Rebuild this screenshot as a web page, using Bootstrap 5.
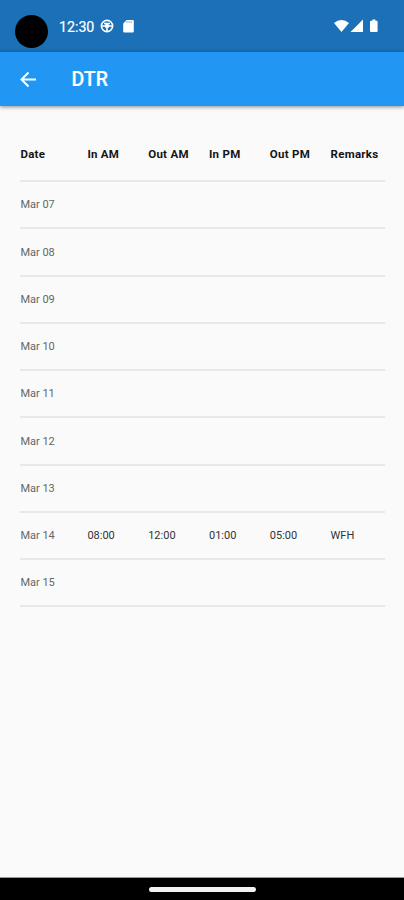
<!DOCTYPE html>
<html lang="en">
<head>
<meta charset="utf-8">
<meta name="viewport" content="width=device-width, initial-scale=1">
<title>DTR</title>
<link href="https://cdn.jsdelivr.net/npm/bootstrap@5.3.0/dist/css/bootstrap.min.css" rel="stylesheet">
<style>
  body { font-family: Roboto, "Liberation Sans", sans-serif; background: #fafafa; height: 900px; overflow: hidden; }
  .status-bar { height: 52px; background: #1b70b8; }
  .camera { width: 33px; height: 33px; margin: 15px 11px 0 15px; background: #000; }
  .clock { font-size: 14.2px; line-height: 18px; width: 40px; margin-top: 18px; -webkit-text-stroke: .2px #fff; }
  .wheel-icon { margin: 19px 0 0 1px; }
  .card-icon { margin: 20px 0 0 9px; }
  .signal-icons { margin-top: 18px; }
  .app-bar { height: 54px; background: #2196f3; box-shadow: 0 1px 4px rgba(0,0,0,.45); padding-left: 20px; }
  .app-title { font-size: 19.5px; line-height: 24px; font-weight: 500; margin: 2px 0 0 34.5px; -webkit-text-stroke: .2px #fff; }
  .sheet { padding: 21px 19px 0 20px; }
  .log { table-layout: fixed; width: 365px; border-collapse: separate; border-spacing: 0; font-size: 11px; line-height: 14px; }
  .log th, .log td { padding: 1.4px 0 0 .4px; height: 47.25px; vertical-align: middle; white-space: nowrap; border-bottom: 2px solid #e8e8e8; color: #333; }
  .log th { height: 55px; padding-top: 1px; font-weight: 700; font-size: 11.5px; color: #151515; letter-spacing: .27px; }
  .log td:first-child { color: #666; }
  .col-date { width: 67px; }
  .col-time { width: 60.8px; }
  .nav-strip { height: 23px; background: #000; border-top: 1px solid #999; }
  .pill { width: 107px; height: 5px; background: #f2f2f2; }
</style>
</head>
<body class="d-flex flex-column">
<header class="status-bar d-flex align-items-start text-white flex-shrink-0">
  <div class="camera rounded-circle"></div>
  <div class="clock">12:30</div>
  <svg class="wheel-icon" width="14" height="14" viewBox="0 0 14 14" fill="none" stroke="#fff" stroke-width="1.6"><circle cx="7" cy="7" r="5.6"/><path d="M1.500 7h11M7 7v6M4 4.500h6"/><circle cx="7" cy="7" r="1.400" fill="#fff"/></svg>
  <svg class="card-icon" width="11" height="13" viewBox="0 0 11 13"><path fill="#fff" d="M3.600 0H9.500q1.300 0 1.300 1.300v10q0 1.300-1.300 1.300h-8Q.2 12.600.2 11.300V3.400z"/><path d="M4 1.300v1.400M6.100 1.300v1.400M8.200 1.300v1.400" stroke="#1b70b8" stroke-width=".8"/></svg>
  <svg class="signal-icons ms-auto me-4" width="47" height="15" viewBox="0 0 47 15" fill="#fff"><path d="M1 5Q4.500 2 8.500 2T16 5L8.500 14z"/><path d="M30 1.500V14H17.500z"/><path d="M38 2.800h1.400V1.500h3v1.300h1.200q1 0 1 1V13q0 1-1 1H38q-1 0-1-1V3.800q0-1 1-1z"/></svg>
</header>
<nav class="app-bar d-flex align-items-center text-white flex-shrink-0">
  <svg width="17" height="17" viewBox="0 0 17 17" fill="none" stroke="#fff" stroke-width="2"><path d="M16 8.500H2M8.500 1.500l-7 7 7 7"/></svg>
  <div class="app-title">DTR</div>
</nav>
<main class="sheet flex-grow-1">
  <table class="log">
    <colgroup><col class="col-date"><col class="col-time"><col class="col-time"><col class="col-time"><col class="col-time"><col></colgroup>
    <thead><tr><th>Date</th><th>In AM</th><th>Out AM</th><th>In PM</th><th>Out PM</th><th>Remarks</th></tr></thead>
    <tbody>
      <tr><td>Mar 07</td><td></td><td></td><td></td><td></td><td></td></tr>
      <tr><td>Mar 08</td><td></td><td></td><td></td><td></td><td></td></tr>
      <tr><td>Mar 09</td><td></td><td></td><td></td><td></td><td></td></tr>
      <tr><td>Mar 10</td><td></td><td></td><td></td><td></td><td></td></tr>
      <tr><td>Mar 11</td><td></td><td></td><td></td><td></td><td></td></tr>
      <tr><td>Mar 12</td><td></td><td></td><td></td><td></td><td></td></tr>
      <tr><td>Mar 13</td><td></td><td></td><td></td><td></td><td></td></tr>
      <tr><td>Mar 14</td><td>08:00</td><td>12:00</td><td>01:00</td><td>05:00</td><td>WFH</td></tr>
      <tr><td>Mar 15</td><td></td><td></td><td></td><td></td><td></td></tr>
    </tbody>
  </table>
</main>
<footer class="nav-strip d-flex align-items-center justify-content-center flex-shrink-0"><div class="pill rounded-pill"></div></footer>
<script src="https://cdn.jsdelivr.net/npm/bootstrap@5.3.0/dist/js/bootstrap.bundle.min.js"></script>
</body>
</html>
